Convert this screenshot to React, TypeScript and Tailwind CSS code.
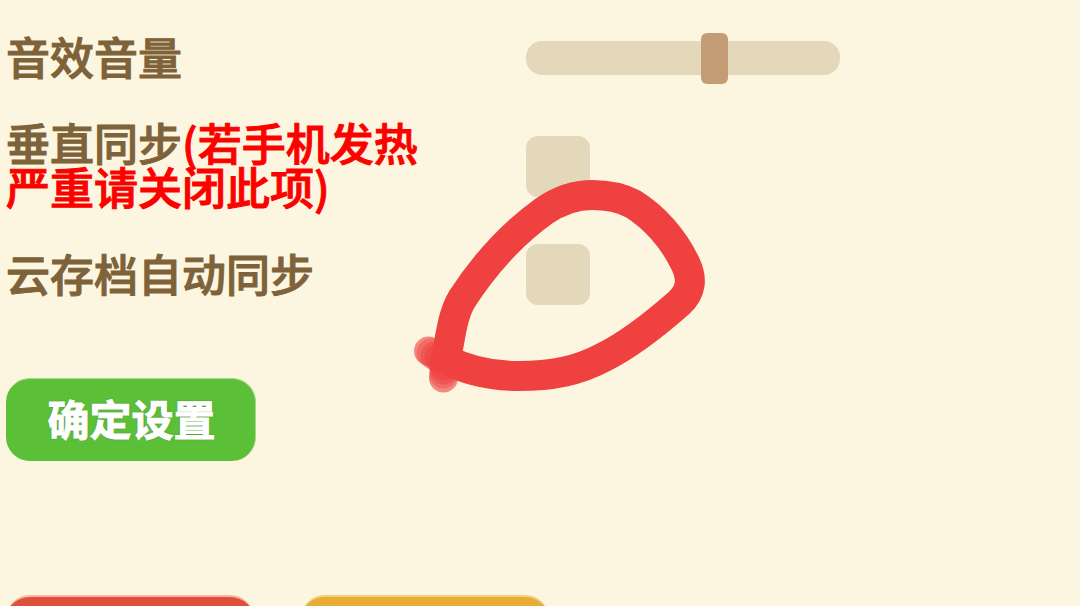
import React, { useState } from "react";

type CheckRowProps = {
  id: string;
  label: string;
  note?: string;
  checked: boolean;
  onChange: (checked: boolean) => void;
};

const CheckRow = ({ id, label, note, checked, onChange }: CheckRowProps) => {
  return (
    <div className="grid grid-cols-[520px_1fr] items-center">
      <label htmlFor={id} className="max-w-[440px] pb-1">
        {label}
        {note && <span className="text-[#fb0200]">{note}</span>}
      </label>
      <input
        id={id}
        type="checkbox"
        checked={checked}
        onChange={(e) => onChange(e.target.checked)}
        className="h-[61px] w-16 appearance-none rounded-xl bg-[#e3d8ba] checked:bg-[#c49d77]"
      />
    </div>
  );
};

// hand drawn marker loop around the cloud save switch
const MarkerLoop = () => (
  <svg
    className="pointer-events-none absolute left-[400px] top-[170px]"
    width="320"
    height="240"
    viewBox="0 0 320 240"
    fill="none"
    stroke="#ee4140"
    strokeLinecap="round"
    strokeLinejoin="round"
  >
    <g fill="#ee4140" stroke="none">
      <circle cx="28.5" cy="181" r="14.5" fillOpacity="0.6" />
      <circle cx="31" cy="183" r="14.5" fillOpacity="0.4" />
      <circle cx="35" cy="186" r="14.5" fillOpacity="0.5" />
      <circle cx="39" cy="188" r="14.5" fillOpacity="0.6" />
      <circle cx="43.5" cy="208" r="14.5" fillOpacity="0.6" />
      <circle cx="43.5" cy="204" r="14.5" fillOpacity="0.4" />
      <circle cx="44" cy="200" r="14.5" fillOpacity="0.5" />
      <circle cx="44" cy="196" r="14.5" fillOpacity="0.6" />
    </g>
    <path
      d="M45 189C66 200 90 206 118 206C152 206 178 201 204 187C230 174 254 155 279 133C292 121 292 108 286 95C274 69 254 47 233 34C220 27 206 25 192 25C175 25 160 30 144 41C112 64 86 92 62 129C53 144 51 163 47 184L45 189"
      strokeWidth="30"
    />
  </svg>
);

const App = () => {
  const [volume, setVolume] = useState(61);
  const [vsync, setVsync] = useState(false);
  const [cloudSync, setCloudSync] = useState(false);

  return (
    <main
      className="relative h-screen overflow-hidden bg-[#fcf6e0] px-1.5 pt-8 text-[44px] leading-[44px] font-medium text-[#7e6239] [-webkit-text-stroke:1px_currentColor]"
      style={{ fontFamily: '"Noto Sans CJK SC", sans-serif' }}
    >
      <div className="grid grid-cols-[520px_1fr] items-center">
        <label htmlFor="volume" className="pb-1">
          音效音量
        </label>
        <input
          id="volume"
          type="range"
          min={0}
          max={100}
          value={volume}
          onChange={(e) => setVolume(Number(e.target.value))}
          className="h-[52px] w-[314px] appearance-none bg-transparent [&::-webkit-slider-runnable-track]:h-[34px] [&::-webkit-slider-runnable-track]:rounded-2xl [&::-webkit-slider-runnable-track]:bg-[#e3d8ba] [&::-webkit-slider-thumb]:-mt-2 [&::-webkit-slider-thumb]:h-[51px] [&::-webkit-slider-thumb]:w-[27px] [&::-webkit-slider-thumb]:appearance-none [&::-webkit-slider-thumb]:rounded-md [&::-webkit-slider-thumb]:bg-[#c49d77]"
        />
      </div>

      <div className="mt-9 flex flex-col gap-8">
        <CheckRow
          id="vsync"
          label="垂直同步"
          note="(若手机发热严重请关闭此项)"
          checked={vsync}
          onChange={setVsync}
        />
        <CheckRow
          id="cloud"
          label="云存档自动同步"
          checked={cloudSync}
          onChange={setCloudSync}
        />
      </div>

      <button className="mt-[73px] block h-[83px] w-[250px] rounded-3xl border-t border-r border-[#a5d68c] bg-[#5bbf38] pb-1 pl-0.5 text-[42px] font-bold text-white [text-shadow:0_0_2px_#4d6b43]">
        确定设置
      </button>

      <div className="mt-[134px] flex gap-[47px]">
        <button
          aria-label="退出"
          className="h-[83px] w-[248px] rounded-3xl border-t-2 border-[#f4b8a2] bg-[#e04f39]"
        />
        <button
          aria-label="返回"
          className="h-[83px] w-[248px] rounded-3xl border-t-2 border-[#f0cf85] bg-[#e8ad34]"
        />
      </div>

      <MarkerLoop />
    </main>
  );
};

export default App;
